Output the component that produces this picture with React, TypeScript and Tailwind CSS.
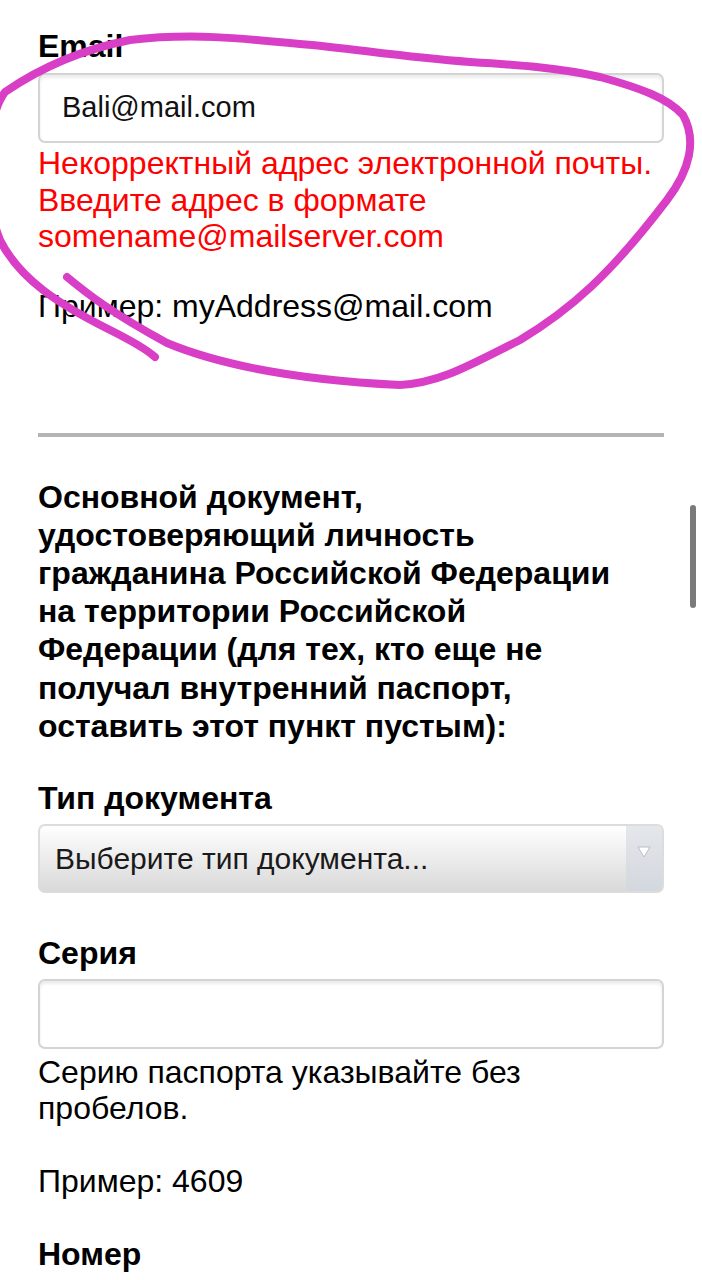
import React from 'react';

const font = { fontFamily: '"Liberation Sans", Arial, sans-serif' };

function Label({ children, className = '' }: { children: React.ReactNode; className?: string }) {
  return <div className={`text-[32px] leading-[36px] font-bold text-black ${className}`}>{children}</div>;
}

function TextInput({ value = '' }: { value?: string }) {
  return (
    <div className="h-[70px] rounded-[7px] border-2 border-[#d4d4d4] bg-white shadow-[inset_0_3px_3px_rgba(0,0,0,0.08)] flex items-center px-[22px] text-[29px] text-[#111]">
      {value}
    </div>
  );
}

const headingLines = [
  'Основной документ,',
  'удостоверяющий личность',
  'гражданина Российской Федерации',
  'на территории Российской',
  'Федерации (для тех, кто еще не',
  'получал внутренний паспорт,',
  'оставить этот пункт пустым):',
];

export default function App() {
  return (
    <div className="relative w-[702px] h-[1280px] overflow-hidden bg-white" style={font}>
      <div className="pl-[38px] pr-[38px] pt-[28px]">
        {/* email */}
        <Label>Email</Label>
        <div className="mt-[9px]">
          <TextInput value="Bali@mail.com" />
        </div>
        <div className="mt-[2px] text-[32px] leading-[36.5px] text-[#ff0000]">
          Некорректный адрес электронной почты. Введите адрес в формате somename@mailserver.com
        </div>
        <div className="mt-[33px] text-[32px] leading-[36px] text-black">Пример: myAddress@mail.com</div>

        <div className="mt-[109px] h-[4px] bg-[#b4b4b4]" />

        <div className="mt-[41px] text-[32px] leading-[38.2px] font-bold text-black">
          {headingLines.map((l) => (
            <div key={l} className="whitespace-nowrap">{l}</div>
          ))}
        </div>

        {/* doc type */}
        <Label className="mt-[35px]">Тип документа</Label>
        <div className="mt-[8px] h-[69px] rounded-[7px] border-2 border-[#dcdcdc] bg-gradient-to-b from-white to-[#d9d9d9] flex overflow-hidden">
          <div className="flex-1 flex items-center pl-[15px] text-[30px] text-[#1a1a1a]">Выберите тип документа...</div>
          <div className="w-[36px] bg-gradient-to-b from-[#e4e7eb] to-[#d3d8de] flex justify-center pt-[20px]">
            <svg width="14" height="12" viewBox="0 0 14 12">
              <path d="M1 1 L13 1 L7 11 Z" fill="#fff" stroke="#b8bec6" strokeWidth="1" />
            </svg>
          </div>
        </div>

        {/* series */}
        <Label className="mt-[42px]">Серия</Label>
        <div className="mt-[8px]">
          <TextInput />
        </div>
        <div className="mt-[5px] text-[32px] leading-[36px] text-black">Серию паспорта указывайте без пробелов.</div>
        <div className="mt-[37px] text-[32px] leading-[36px] text-black">Пример: 4609</div>

        <Label className="mt-[37px]">Номер</Label>
      </div>

      {/* scrollbar */}
      <div className="absolute left-[690px] top-[505px] w-[6px] h-[103px] rounded-full bg-[#7a7a7a]" />

      {/* hand-drawn annotation */}
      <svg className="absolute left-0 top-0 pointer-events-none" width="702" height="420" viewBox="0 0 702 420">
        <path
          d="M67 277 C85 292 110 312 167 343 C220 365 300 380 400 385 C440 383 470 365 520 340 C570 310 610 275 667 200 C690 170 697 140 683 115 C668 98 640 88 600 77 C560 68 520 65 470 62 C400 57 350 48 300 44 C240 38 190 33 130 40 C80 50 40 68 5 92 C-15 120 -20 190 0 240 C20 280 60 305 110 330 C130 340 145 348 155 357"
          fill="none"
          stroke="#d93fc6"
          strokeWidth="8"
          strokeLinecap="round"
          strokeLinejoin="round"
        />
      </svg>
    </div>
  );
}
